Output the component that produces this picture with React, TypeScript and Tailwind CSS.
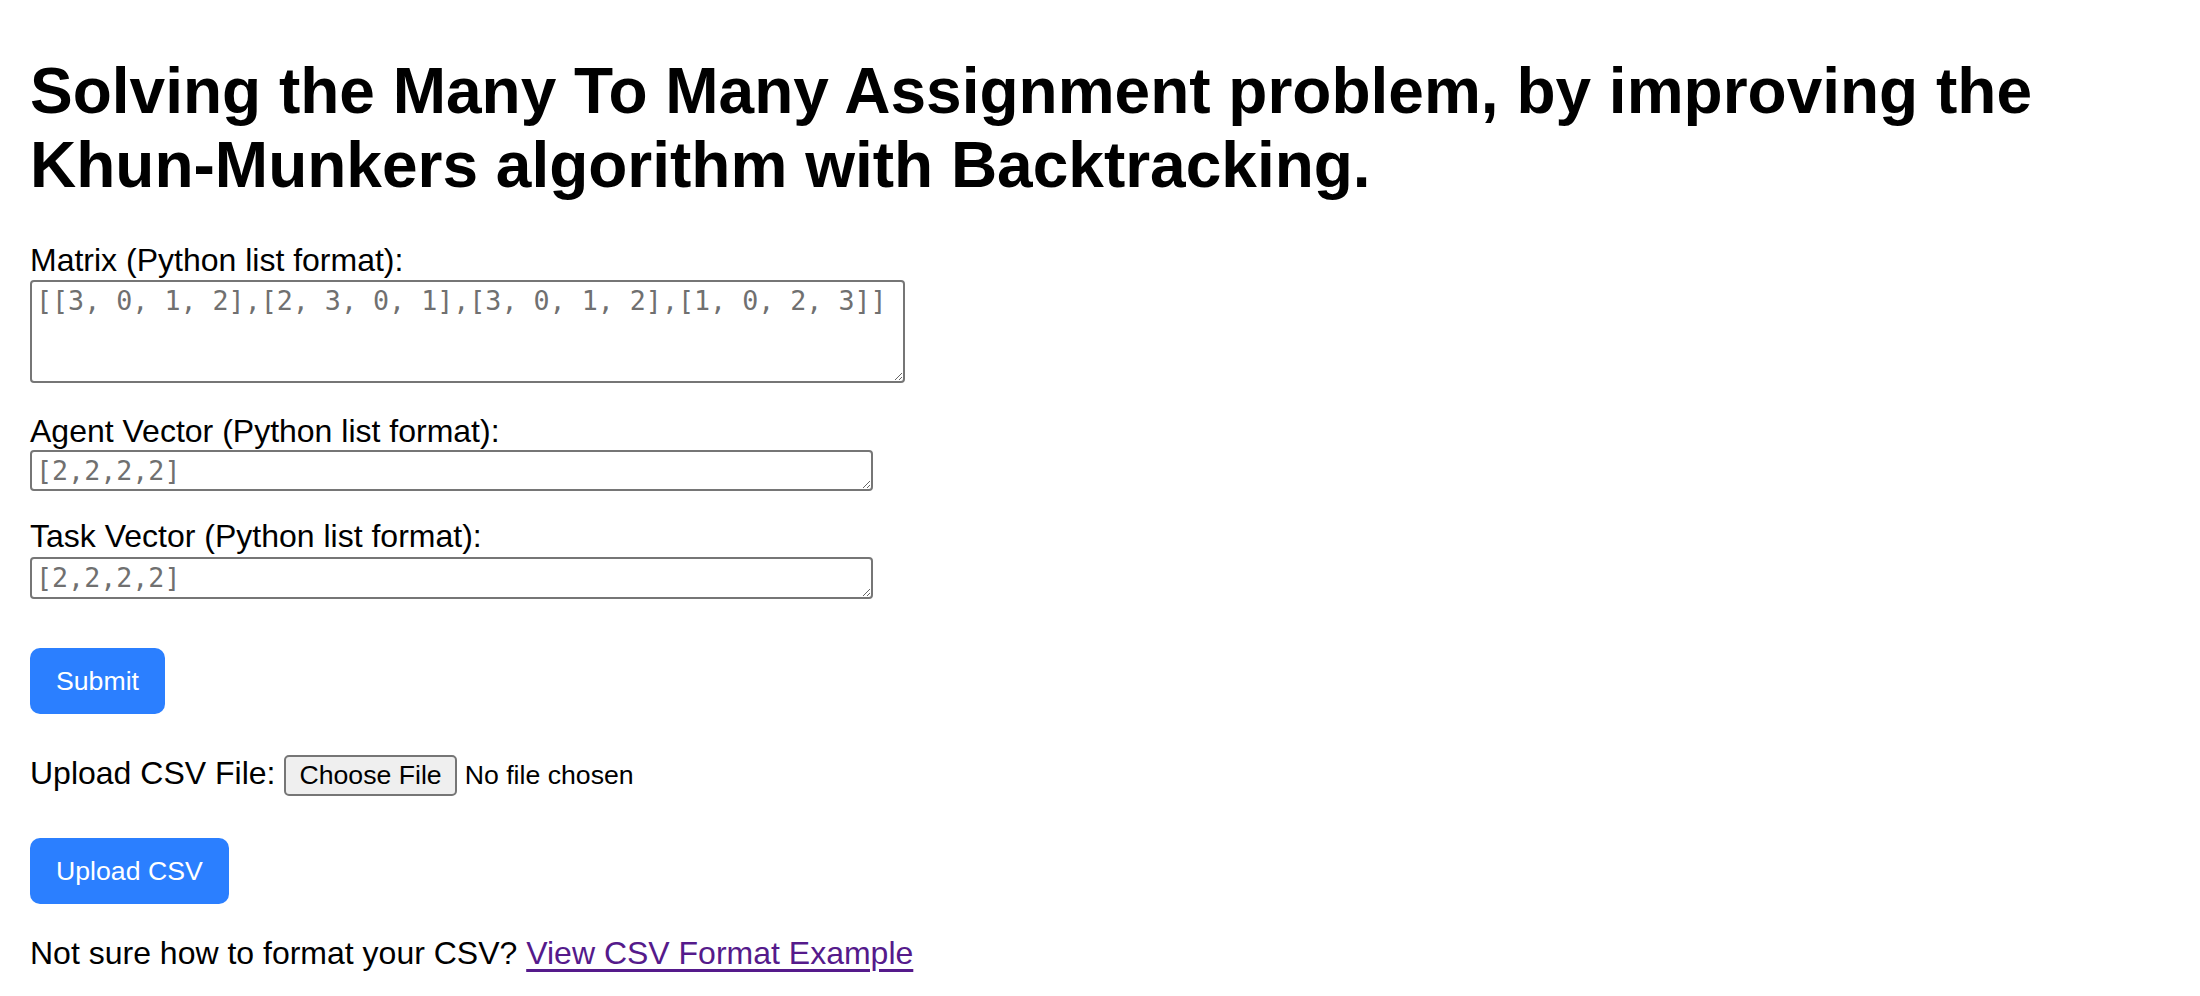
import React from 'react';

const sans = "font-['Liberation_Sans',Arial,sans-serif]";
const mono = "font-['DejaVu_Sans_Mono','Liberation_Mono',monospace]";

const fieldClass = `block w-full ${mono} text-[26.67px] leading-[31px] text-black placeholder:text-[#707070] bg-white border-2 border-[#767676] rounded-[4px] px-[4px] py-[3px] outline-none`;

const buttonClass = "block bg-blue-500 text-white text-[26.67px] leading-[30px] h-[66px] rounded-[10px] px-[26px] cursor-pointer";

export default function App() {
  return (
    <div className={`min-h-screen bg-white text-black ${sans} px-[30px] pt-[55px] pb-[30px]`}>
      <h1 className="text-[64px] font-bold leading-[73.6px] mb-[40px]">
        Solving the Many To Many Assignment problem, by improving the Khun-Munkers algorithm with Backtracking.
      </h1>

      <form className="flex flex-col items-start" onSubmit={(e) => e.preventDefault()}>
        {/* Matrix input */}
        <label className="text-[32px] leading-[37px]">Matrix (Python list format):</label>
        <div className="w-[875px] mt-[1px]">
          <textarea
            className={`${fieldClass} h-[103px]`}
            placeholder="[[3, 0, 1, 2],[2, 3, 0, 1],[3, 0, 1, 2],[1, 0, 2, 3]]"
          />
        </div>

        <label className="text-[32px] leading-[37px] mt-[30px]">Agent Vector (Python list format):</label>
        <div className="w-[843px]">
          <textarea className={`${fieldClass} h-[41px]`} placeholder="[2,2,2,2]" />
        </div>

        <label className="text-[32px] leading-[37px] mt-[27px]">Task Vector (Python list format):</label>
        <div className="w-[843px] mt-[2px]">
          <textarea className={`${fieldClass} h-[42px]`} placeholder="[2,2,2,2]" />
        </div>

        <button type="submit" className={`${buttonClass} mt-[49px]`}>
          Submit
        </button>

        {/* CSV upload */}
        <div className="flex items-baseline mt-[41px] text-[32px] leading-[37px]">
          <span>Upload CSV File:</span>
          <button
            type="button"
            className="ml-[9px] h-[41px] px-[13px] bg-[#efefef] border-2 border-[#767676] rounded-[5px] text-[26.67px] leading-[31px]"
          >
            Choose File
          </button>
          <span className="ml-[8px] text-[26.67px]">No file chosen</span>
        </div>

        <button type="button" className={`${buttonClass} mt-[42px]`}>
          Upload CSV
        </button>

        <p className="text-[32px] leading-[37px] mt-[31px]">
          Not sure how to format your CSV?{' '}
          <a href="#" className="text-[#551a8b] underline underline-offset-[5px]">
            View CSV Format Example
          </a>
        </p>
      </form>
    </div>
  );
}
